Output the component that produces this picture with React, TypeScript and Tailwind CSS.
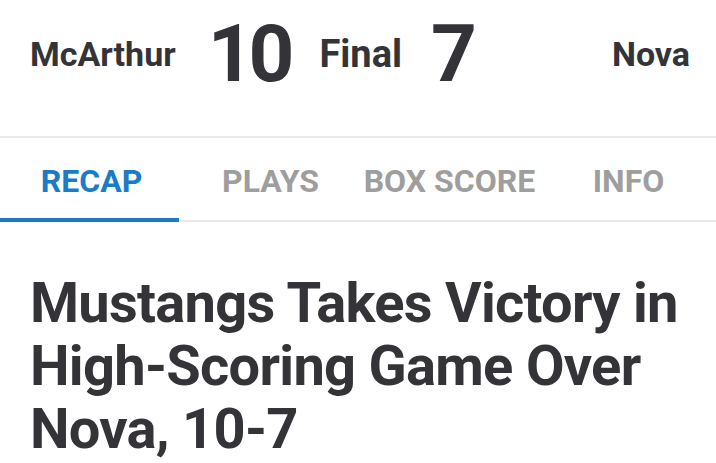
import { useState } from 'react'

const tabs = ['RECAP', 'PLAYS', 'BOX SCORE', 'INFO']

const App = () => {
  const [active, setActive] = useState(0)

  return (
    <div className="min-h-screen bg-white text-[#333338]" style={{ fontFamily: 'Roboto, "Liberation Sans", sans-serif' }}>
      <header className="flex h-[136px] items-center pb-[28px] pl-[30px] pr-[26px]">
        <span className="text-[34px] font-bold leading-none">McArthur</span>
        <span className="ml-[32px] text-[80px] font-bold leading-none tracking-[-5px]">10</span>
        <span className="ml-[30px] text-[38px] font-bold leading-none">Final</span>
        <span className="ml-[29px] text-[80px] font-bold leading-none">7</span>
        <span className="ml-auto text-[34px] font-bold leading-none">Nova</span>
      </header>
      <nav className="grid h-[86px] grid-cols-4 border-y-2 border-[#e9e9e9]">
        {tabs.map((tab, i) => (
          <button
            key={tab}
            type="button"
            onClick={() => setActive(i)}
            className={`relative flex items-center justify-center pl-[4px] pt-[3px] text-[32px] font-bold ${
              i === active ? 'text-[#1a7bc6]' : 'text-[#9e9e9e]'
            }`}
          >
            {tab}
            {i === active && <span className="absolute inset-x-0 -bottom-[2px] h-[4px] bg-[#1a7bc6]" />}
          </button>
        ))}
      </nav>
      <main className="pl-[30px] pr-[20px] pt-[50px]">
        <h1 className="text-[56px] font-bold leading-[63px] tracking-[-0.7px]">
          Mustangs Takes Victory in High-Scoring Game Over Nova, 10-7
        </h1>
      </main>
    </div>
  )
}

export default App
